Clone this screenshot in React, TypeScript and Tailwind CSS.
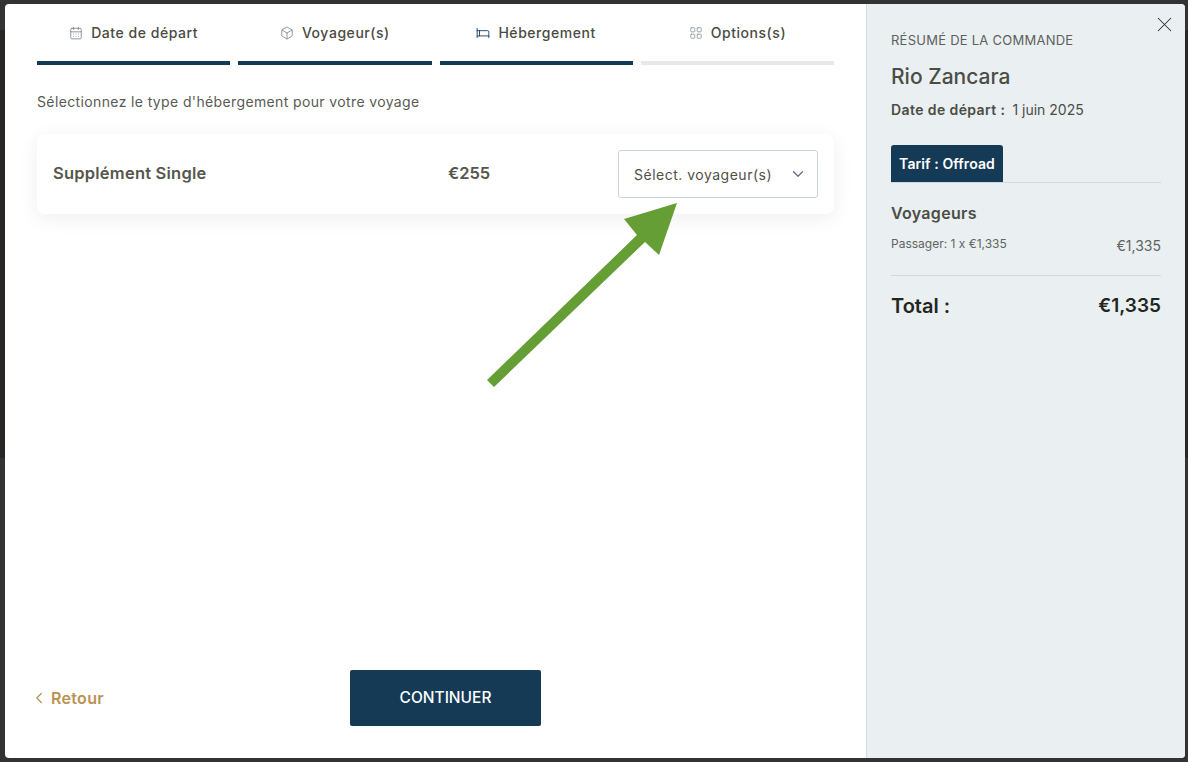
import { Bed, Box, CalendarDays, ChevronDown, ChevronLeft, LayoutGrid, X } from "lucide-react";

const font = "font-['Inter','Liberation_Sans',sans-serif]";

const tabs = [
  { label: "Date de départ", icon: CalendarDays, iconColor: "text-[#6b7280]", stroke: 1.25, done: true },
  { label: "Voyageur(s)", icon: Box, iconColor: "text-[#6b7280]", stroke: 1.25, done: true },
  { label: "Hébergement", icon: Bed, iconColor: "text-[#14395a]", stroke: 1.5, done: true },
  { label: "Options(s)", icon: LayoutGrid, iconColor: "text-[#7f8994]", stroke: 1.25, done: false },
];

const Tabs = () => (
  <div className="flex gap-2">
    {tabs.map((tab) => (
      <div key={tab.label} className="flex-1">
        <div className="flex h-[57px] items-center justify-center gap-2">
          <tab.icon size={14} strokeWidth={tab.stroke} className={tab.iconColor} />
          <span className="text-[14px] font-medium leading-5 tracking-[0.55px] text-[#4a4a42]">{tab.label}</span>
        </div>
        <div className={tab.done ? "h-1 bg-[#143a56]" : "h-1 bg-[#e8e8e8]"} />
      </div>
    ))}
  </div>
);

const Arrow = () => (
  <svg className="absolute left-[482px] top-[199px]" width="200" height="192" viewBox="482 199 200 192">
    <polygon
      fill="#669e36"
      points="677,203 659,255 645,242 494,387 487,380 637,235 624,219"
    />
  </svg>
);

const Summary = () => (
  <aside className="relative flex w-[319px] flex-col border-l border-[#d5dbe0] bg-[#eaeff2] pl-6 pr-6">
    <X size={25} strokeWidth={1} className="absolute right-[8px] top-[8px] text-[#33332e]" />
    <div className="mt-[28px] text-[13px] leading-4 tracking-[0.25px] text-[#5c5f5c]">RÉSUMÉ DE LA COMMANDE</div>
    <div className="mt-[15px] text-[21px] font-medium leading-7 text-[#4a4d44]">Rio Zancara</div>
    <div className="mt-[9px] flex items-center gap-[7px] text-[14px] leading-5 text-[#4a4d44]">
      <span className="font-semibold tracking-[0.4px]">Date de départ :</span>
      <span>1 juin 2025</span>
    </div>
    <div className="mt-[25px] flex border-b border-[#d3d8dc]">
      <div className="flex h-[37px] w-[112px] items-center justify-center rounded-t-[3px] bg-[#143a56] text-[14px] font-semibold tracking-[0.1px] text-white">
        Tarif : Offroad
      </div>
    </div>
    <div className="mt-[20px] text-[16px] font-semibold leading-5 tracking-[0.3px] text-[#4a4d44]">Voyageurs</div>
    <div className="mt-[11px] flex items-start justify-between border-b border-[#d3d8dc] pb-[19px]">
      <span className="text-[12px] leading-5 text-[#5f6460]">Passager: 1 x €1,335</span>
      <span className="mt-[2px] text-[14px] leading-5 text-[#5f6460]">€1,335</span>
    </div>
    <div className="mt-[16px] flex items-center justify-between font-semibold leading-7 text-[#23261c]">
      <span className="text-[20px]">Total :</span>
      <span className="text-[19px]">€1,335</span>
    </div>
  </aside>
);

export default function App() {
  return (
    <div className={`${font} h-[762px] w-[1188px] overflow-hidden bg-[linear-gradient(to_bottom,#333333_30px,#282725_30px,#282725_458px,#333333_458px)] pb-1 pl-[5px] pr-[3px] pt-1`}>
      <div className="relative flex h-[754px] overflow-hidden rounded-[4px] bg-white">
        <main className="flex w-[861px] flex-col pl-8 pr-[32px]">
          <Tabs />
          <p className="mt-[27px] text-[14px] leading-5 tracking-[0.37px] text-[#5a5a54]">
            Sélectionnez le type d'hébergement pour votre voyage
          </p>
          <div className="mt-[22px] flex h-[80px] items-center rounded-lg bg-white pl-4 pr-4 shadow-[0_4px_20px_rgba(0,0,0,0.07)]">
            <span className="-mt-[2px] w-[395px] text-[16.5px] font-semibold tracking-[0.22px] text-[#55564d]">Supplément Single</span>
            <span className="-mt-[2px] w-[170px] text-[16.5px] font-semibold text-[#55564d]">€255</span>
            <div className="flex h-[48px] w-[200px] items-center justify-between rounded-[3px] border border-[#ccd2da] pl-[15px] pr-[10px]">
              <span className="text-[14px] tracking-[0.5px] text-[#4f4f49]">Sélect. voyageur(s)</span>
              <ChevronDown size={18} strokeWidth={1.75} className="text-[#6d6a8a]" />
            </div>
          </div>
          <div className="mt-auto mb-[32px] flex items-center">
            <div className="flex w-[313px] items-center gap-[3px] text-[#b99252]">
              <ChevronLeft size={18} strokeWidth={1.75} className="-ml-[7px]" />
              <span className="text-[16px] font-semibold tracking-[0.3px]">Retour</span>
            </div>
            <button className="flex h-[56px] w-[191px] items-center justify-center rounded-[2px] bg-[#143a56] text-[15.5px] font-medium text-white">
              CONTINUER
            </button>
          </div>
        </main>
        <Summary />
      </div>
      <Arrow />
    </div>
  );
}
